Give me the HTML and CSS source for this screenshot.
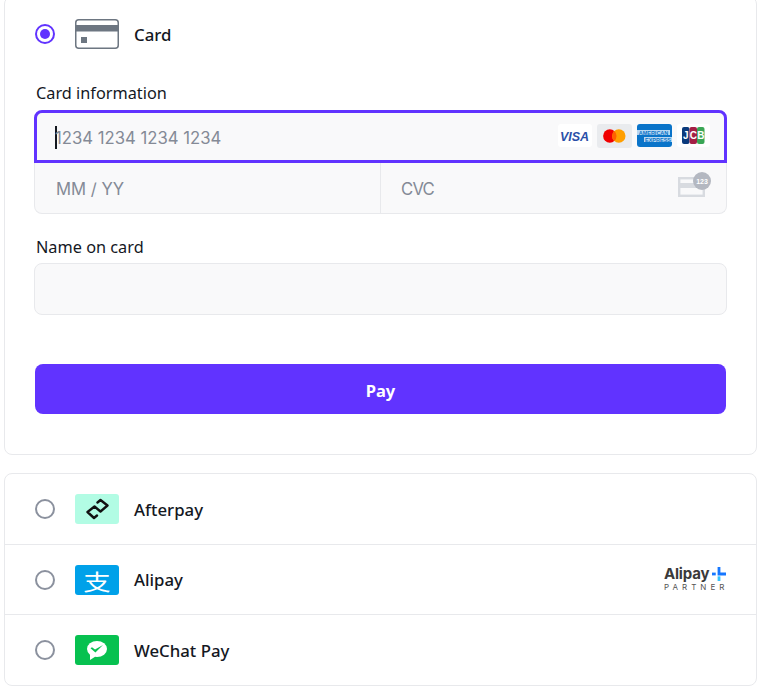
FILE: index.html
```html
<!DOCTYPE html>
<html lang="en">
<head>
    <meta charset="UTF-8">
    <meta name="viewport" content="width=device-width, initial-scale=1.0">
    <title>Payment</title>
    <link rel="stylesheet" href="styles.css">
</head>
<body>
    <div class="box box-card">
        <div class="method method-open">
            <span class="radio radio-on"></span>
            <svg class="logo" width="44" height="30" viewBox="0 0 44 30">
                <rect x="0.75" y="0.75" width="42.5" height="28.5" rx="3" fill="#fff" stroke="#6d7681" stroke-width="1.5"/>
                <rect x="1" y="6" width="42" height="6.500" fill="#6d7681"/>
                <rect x="6" y="18" width="6" height="6" fill="#6d7681"/>
            </svg>
            <span class="method-name">Card</span>
        </div>

        <div class="field-label field-label-first">Card information</div>
        <div class="card-number">
            <span class="caret"></span>
            <span class="placeholder">1234 1234 1234 1234</span>
            <div class="brands">
                <svg class="brand" width="34" height="23" viewBox="0 0 34 23">
                    <rect width="34" height="23" rx="3" fill="#fff"/>
                    <text x="16.500" y="16.500" text-anchor="middle" class="visa-text">VISA</text>
                </svg>
                <svg class="brand" width="35" height="24" viewBox="0 0 35 24">
                    <rect width="35" height="24" rx="3" fill="#e9ebee"/>
                    <circle cx="12.800" cy="12" r="6.700" fill="#f00000"/>
                    <circle cx="21.800" cy="12" r="6.700" fill="#ff9f00"/>
                    <path d="M17.300 7a6.700 6.700 0 0 1 0 10a6.700 6.700 0 0 1 0-10z" fill="#ff5f00"/>
                </svg>
                <svg class="brand" width="35" height="23" viewBox="0 0 35 23">
                    <rect width="35" height="23" rx="3" fill="#0a74c9"/>
                    <rect x="0" y="6" width="33" height="5" fill="#b8d8f2"/>
                    <rect x="7" y="13" width="28" height="5" fill="#b8d8f2"/>
                    <text x="16.500" y="10.600" text-anchor="middle" class="amex-text">AMERICAN</text>
                    <text x="21" y="17.600" text-anchor="middle" class="amex-text">EXPRESS</text>
                </svg>
                <svg class="brand" width="33" height="23" viewBox="0 0 33 23">
                    <rect width="33" height="23" rx="3" fill="#fff"/>
                    <rect x="5" y="3" width="7.500" height="17" rx="2" fill="#0b3a7c"/>
                    <rect x="12.500" y="3" width="7.500" height="17" rx="2" fill="#a41f45"/>
                    <rect x="20" y="3" width="7.500" height="17" rx="2" fill="#3aa655"/>
                    <text x="8.800" y="15" text-anchor="middle" class="jcb-text">J</text>
                    <text x="16.300" y="15" text-anchor="middle" class="jcb-text">C</text>
                    <text x="23.800" y="15" text-anchor="middle" class="jcb-text">B</text>
                </svg>
            </div>
        </div>
        <div class="card-extra">
            <div class="card-cell card-cell-date"><span class="placeholder">MM / YY</span></div>
            <div class="card-cell card-cell-cvc">
                <span class="placeholder placeholder-cvc">CVC</span>
                <svg class="cvc-icon" width="33" height="26" viewBox="0 0 33 26">
                    <rect x="1.200" y="6.200" width="24.600" height="17.600" fill="none" stroke="#d8dbe0" stroke-width="2.400"/>
                    <rect x="1" y="11" width="25" height="5" fill="#d8dbe0"/>
                    <circle cx="24" cy="9" r="9" fill="#b4b8c1"/>
                    <text x="24" y="11.500" text-anchor="middle" class="cvc-text">123</text>
                </svg>
            </div>
        </div>

        <div class="field-label">Name on card</div>
        <div class="name-input"></div>

        <button class="pay-button">Pay</button>
    </div>

    <div class="box box-list">
        <div class="method">
            <span class="radio"></span>
            <svg class="logo" width="44" height="30" viewBox="0 0 44 30">
                <rect width="44" height="30" rx="3" fill="#b2fce4"/>
                <path d="M22.500 8.500L25.500 6 32.500 11.500 25.500 17.500 19.500 12.500 12.500 18 19 24 22 21.500" fill="none" stroke="#111" stroke-width="2.400" stroke-linejoin="round" stroke-linecap="round"/>
            </svg>
            <span class="method-name">Afterpay</span>
        </div>
        <div class="method">
            <span class="radio"></span>
            <div class="logo logo-alipay"><span class="alipay-glyph">支</span></div>
            <span class="method-name">Alipay</span>
            <div class="partner">
                <div class="partner-top">Alipay
                    <svg width="14" height="14" viewBox="0 0 15 15">
                        <path d="M0 6h4v3H0z" fill="#1677ff"/>
                        <path d="M6 0h3v6h6v3H6z" fill="#1677ff"/>
                        <path d="M6 10h3v5H6z" fill="#33c3ff"/>
                    </svg>
                </div>
                <div class="partner-sub">PARTNER</div>
            </div>
        </div>
        <div class="method">
            <span class="radio"></span>
            <svg class="logo" width="44" height="30" viewBox="0 0 44 30">
                <rect width="44" height="30" rx="3" fill="#07c150"/>
                <ellipse cx="22" cy="14" rx="10" ry="8" fill="#fff"/>
                <path d="M15 19l0 6 5.500-3.500z" fill="#fff"/>
                <path d="M15.500 13.200l1.500-1 3 2.300 8-4.600-7.600 7.500z" fill="#07c150"/>
            </svg>
            <span class="method-name">WeChat Pay</span>
        </div>
    </div>
</body>
</html>
```

FILE: styles.css
```css
* { margin: 0; padding: 0; box-sizing: border-box; }
body { font-family: "Noto Sans", Arial, sans-serif; background: #fff; color: #14181f; padding-left: 4px; width: 757px; height: 689px; overflow: hidden; }
.box { border: 1px solid #e8e9ec; border-radius: 8px; background: #fff; }
.box-card { margin-top: -4px; height: 459px; padding: 0 29px; }
.box-list { margin-top: 18px; }

.method { display: flex; align-items: center; height: 70px; padding: 0 30px; border-bottom: 1px solid #e8e9ec; }
.method:first-child { height: 71px; }
.method:last-child { border-bottom: 0; }
.method.method-open { height: 74px; padding: 0 1px; border-bottom: 0; }
.method-name { font-size: 16.800px; font-weight: 500; }
.radio { width: 20px; height: 20px; border: 2px solid #8b919e; border-radius: 50%; margin-right: 20px; flex-shrink: 0; background: #fff; }
.radio-on { border-color: #6133ff; display: flex; align-items: center; justify-content: center; }
.radio-on::after { content: ""; width: 10px; height: 10px; border-radius: 50%; background: #6133ff; }
.logo { margin-right: 15px; flex-shrink: 0; }
.logo-alipay { width: 44px; height: 30px; border-radius: 3px; background: #00a1e9; display: flex; align-items: center; justify-content: center; }
.alipay-glyph { font-family: "Noto Sans CJK SC", sans-serif; font-size: 22px; line-height: 26px; color: #fff; transform: scaleX(1.25); }

.field-label { font-size: 16.300px; line-height: 24px; padding-left: 2px; margin-top: 21px; margin-bottom: 4px; }
.field-label-first { margin-top: 10px; margin-bottom: 5px; }

.card-number { display: flex; align-items: center; height: 53px; border: 3px solid #6133ff; border-radius: 8px 8px 0 0; background: #f9f9fa; padding-left: 18px; }
.caret { width: 2px; height: 23px; background: #14181f; margin-right: -2px; margin-top: 1px; }
.placeholder { font-family: Inter, Arial, sans-serif; font-size: 16.700px; color: #848a96; padding-top: 2px; }
.placeholder-cvc { letter-spacing: -0.8px; }
.brands { display: flex; align-items: center; gap: 5px; margin-left: auto; padding-right: 14px; margin-bottom: 2px; }
.brand { display: block; }
.visa-text { font-family: "Liberation Sans", Arial, sans-serif; font-size: 12.500px; font-weight: 700; font-style: italic; fill: #2a4fa8; }
.amex-text { font-family: "Liberation Sans", Arial, sans-serif; font-size: 5.500px; font-weight: 700; fill: #0a74c9; }
.jcb-text { font-family: "Liberation Sans", Arial, sans-serif; font-size: 10px; font-weight: 700; fill: #fff; }

.card-extra { display: flex; height: 51px; border: 1px solid #e8e9ec; border-top: 0; border-radius: 0 0 8px 8px; background: #f9f9fa; }
.card-cell { display: flex; align-items: center; padding-left: 20px; }
.card-cell-date { width: 346px; border-right: 1px solid #e8e9ec; padding-left: 21px; }
.card-cell-cvc { flex: 1; justify-content: space-between; padding-right: 15px; }
.cvc-icon { display: block; margin-bottom: 6px; }
.cvc-text { font-family: "Liberation Sans", Arial, sans-serif; font-size: 7px; font-weight: 700; fill: #fff; }

.name-input { height: 52px; border: 1px solid #e8e9ec; border-radius: 8px; background: #f9f9fa; }

.pay-button { display: block; width: 691px; height: 50px; margin: 49px 0 0 1px; padding-top: 2px; background: #6133ff; color: #fff; border: none; border-radius: 8px; font-family: "Noto Sans", Arial, sans-serif; font-size: 16.500px; font-weight: 700; }

.partner { margin-left: auto; width: 62px; }
.partner-top { display: flex; align-items: center; justify-content: space-between; font-family: Inter, Arial, sans-serif; font-size: 15px; font-weight: 700; letter-spacing: -0.2px; color: #3a3a3a; line-height: 15px; }
.partner-sub { font-family: Inter, Arial, sans-serif; font-size: 8px; letter-spacing: 4px; color: #555; line-height: 11px; margin-top: 1px; white-space: nowrap; }
```
